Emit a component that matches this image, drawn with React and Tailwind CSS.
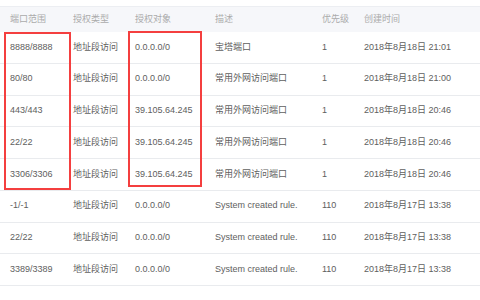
import React from "react";

const rows = [
  ["8888/8888", "地址段访问", "0.0.0.0/0", "宝塔端口", "1", "2018年8月18日 21:01"],
  ["80/80", "地址段访问", "0.0.0.0/0", "常用外网访问端口", "1", "2018年8月18日 21:00"],
  ["443/443", "地址段访问", "39.105.64.245", "常用外网访问端口", "1", "2018年8月18日 20:46"],
  ["22/22", "地址段访问", "39.105.64.245", "常用外网访问端口", "1", "2018年8月18日 20:46"],
  ["3306/3306", "地址段访问", "39.105.64.245", "常用外网访问端口", "1", "2018年8月18日 20:46"],
  ["-1/-1", "地址段访问", "0.0.0.0/0", "System created rule.", "110", "2018年8月17日 13:38"],
  ["22/22", "地址段访问", "0.0.0.0/0", "System created rule.", "110", "2018年8月17日 13:38"],
  ["3389/3389", "地址段访问", "0.0.0.0/0", "System created rule.", "110", "2018年8月17日 13:38"],
];

const headers = ["端口范围", "授权类型", "授权对象", "描述", "优先级", "创建时间"];

const cols = "grid grid-cols-[63px_62px_80px_107px_42px_1fr]";

const App = () => {
  return (
    <div
      className="relative w-[480px] h-[300px] bg-white overflow-hidden pt-[6px] text-[9px]"
      style={{ fontFamily: '"Liberation Sans", "Noto Sans CJK SC", sans-serif' }}
    >
      {/* Header */}
      <div className={`${cols} h-[26px] items-center bg-[#f6f7fa] border-t border-[#eceef2] text-[#ababab]`}>
        {headers.map((h) => (
          <div key={h} className="pl-[10px] whitespace-nowrap">
            {h}
          </div>
        ))}
      </div>

      {/* Rows */}
      {rows.map((r, i) => (
        <div
          key={i}
          className={`${cols} h-[31.75px] items-center border-b border-[#e9ebee] text-[#606060]`}
        >
          {r.map((c, j) => (
            <div key={j} className="pl-[10px] whitespace-nowrap">
              {c}
            </div>
          ))}
        </div>
      ))}

      {/* Red highlight boxes */}
      <div className="absolute left-[4px] top-[32px] w-[67px] h-[158px] border-2 border-[#f43f3f]" />
      <div className="absolute left-[128px] top-[31px] w-[74px] h-[156px] border-2 border-[#f43f3f]" />
    </div>
  );
};

export default App;
